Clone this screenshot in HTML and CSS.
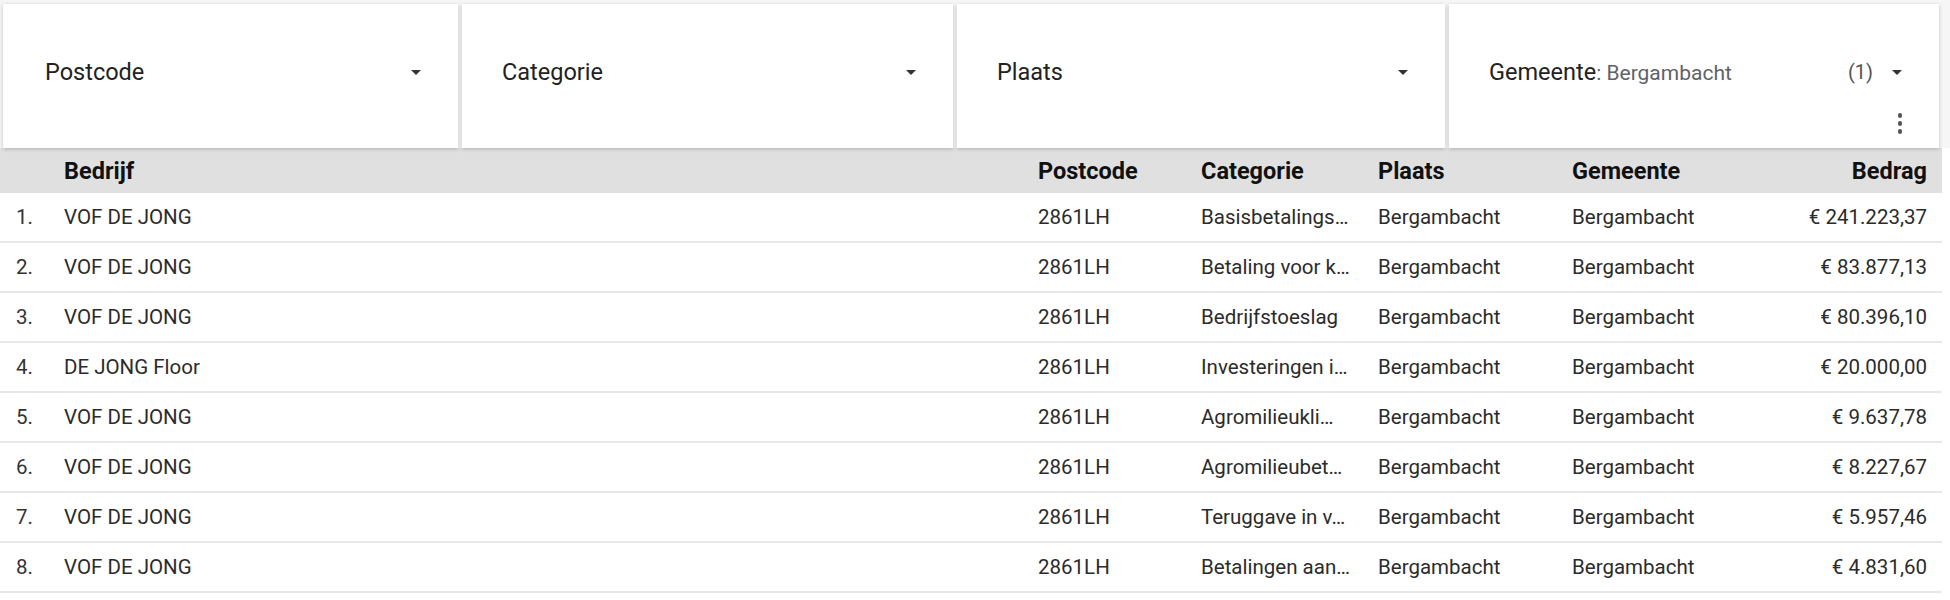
FILE: index.html
```html
<!DOCTYPE html>
<html lang="nl">
<head>
<meta charset="utf-8">
<title>Bedrijven</title>
<link rel="stylesheet" href="styles.css">
</head>
<body>
<div class="filters">
  <div class="card">
    <span class="label">Postcode</span>
    <span class="caret"></span>
  </div>
  <div class="card">
    <span class="label">Categorie</span>
    <span class="caret"></span>
  </div>
  <div class="card">
    <span class="label">Plaats</span>
    <span class="caret"></span>
  </div>
  <div class="card card-active">
    <span class="label">Gemeente<span class="value">: Bergambacht</span></span>
    <span class="count">(1)</span>
    <span class="caret"></span>
    <span class="kebab"><i></i><i></i><i></i></span>
  </div>
</div>

<div class="table">
  <div class="row head">
    <div class="c idx"></div>
    <div class="c">Bedrijf</div>
    <div class="c">Postcode</div>
    <div class="c">Categorie</div>
    <div class="c">Plaats</div>
    <div class="c">Gemeente</div>
    <div class="c num">Bedrag</div>
  </div>
  <div class="row">
    <div class="c idx">1.</div><div class="c">VOF DE JONG</div><div class="c">2861LH</div><div class="c cat">Basisbetalings…</div><div class="c">Bergambacht</div><div class="c">Bergambacht</div><div class="c num">€ 241.223,37</div>
  </div>
  <div class="row">
    <div class="c idx">2.</div><div class="c">VOF DE JONG</div><div class="c">2861LH</div><div class="c cat">Betaling voor k…</div><div class="c">Bergambacht</div><div class="c">Bergambacht</div><div class="c num">€ 83.877,13</div>
  </div>
  <div class="row">
    <div class="c idx">3.</div><div class="c">VOF DE JONG</div><div class="c">2861LH</div><div class="c cat">Bedrijfstoeslag</div><div class="c">Bergambacht</div><div class="c">Bergambacht</div><div class="c num">€ 80.396,10</div>
  </div>
  <div class="row">
    <div class="c idx">4.</div><div class="c">DE JONG Floor</div><div class="c">2861LH</div><div class="c cat">Investeringen i…</div><div class="c">Bergambacht</div><div class="c">Bergambacht</div><div class="c num">€ 20.000,00</div>
  </div>
  <div class="row">
    <div class="c idx">5.</div><div class="c">VOF DE JONG</div><div class="c">2861LH</div><div class="c cat">Agromilieukli…</div><div class="c">Bergambacht</div><div class="c">Bergambacht</div><div class="c num">€ 9.637,78</div>
  </div>
  <div class="row">
    <div class="c idx">6.</div><div class="c">VOF DE JONG</div><div class="c">2861LH</div><div class="c cat">Agromilieubet…</div><div class="c">Bergambacht</div><div class="c">Bergambacht</div><div class="c num">€ 8.227,67</div>
  </div>
  <div class="row">
    <div class="c idx">7.</div><div class="c">VOF DE JONG</div><div class="c">2861LH</div><div class="c cat">Teruggave in v…</div><div class="c">Bergambacht</div><div class="c">Bergambacht</div><div class="c num">€ 5.957,46</div>
  </div>
  <div class="row">
    <div class="c idx">8.</div><div class="c">VOF DE JONG</div><div class="c">2861LH</div><div class="c cat">Betalingen aan…</div><div class="c">Bergambacht</div><div class="c">Bergambacht</div><div class="c num">€ 4.831,60</div>
  </div>
</div>
</body>
</html>
```
FILE: styles.css
```css
html, body {
  margin: 0;
  padding: 0;
  background: #ffffff;
  font-family: Roboto, "Liberation Sans", Arial, sans-serif;
  color: #222222;
}

.filters {
  display: grid;
  grid-template-columns: 455px 491px 488px 490px;
  column-gap: 4px;
  padding: 4px 0 0 3px;
  width: 1950px;
  box-sizing: border-box;
  background: #f6f6f6;
  position: relative;
  z-index: 2;
}

.card {
  position: relative;
  height: 144px;
  background: #ffffff;
  box-shadow: 0 1px 4px rgba(0, 0, 0, 0.22);
  display: flex;
  align-items: center;
  padding: 0 37px 8px 40px;
  box-sizing: border-box;
}

.card:first-child {
  padding-left: 42px;
}

.label {
  flex: 1;
  font-size: 23.5px;
  color: #222222;
  white-space: nowrap;
}

.value {
  font-size: 21px;
  color: #5f6368;
}

.count {
  font-size: 20px;
  color: #555555;
  margin-right: 19px;
}

.caret {
  width: 0;
  height: 0;
  border-left: 5px solid transparent;
  border-right: 5px solid transparent;
  border-top: 5px solid #333333;
}

.kebab {
  position: absolute;
  right: 37px;
  top: 109px;
  display: flex;
  flex-direction: column;
  gap: 3.5px;
}

.kebab i {
  display: block;
  width: 4.5px;
  height: 4.5px;
  border-radius: 50%;
  background: #555555;
}

.table {
  width: 1942px;
  position: relative;
  z-index: 1;
}

.row {
  display: grid;
  grid-template-columns: 64px 974px 163px 177px 194px 200px 1fr;
  align-items: center;
  height: 50px;
  box-sizing: border-box;
  border-bottom: 2px solid #e8e8e8;
  font-size: 20.5px;
  color: #2b2b2b;
  padding-right: 15px;
}

.row.head {
  height: 45px;
  background: #e0e0e0;
  border-bottom: none;
  font-size: 23.5px;
  font-weight: 700;
  color: #111111;
  padding-top: 1px;
}

.c {
  white-space: nowrap;
  overflow: hidden;
}

.idx {
  padding-left: 16px;
  color: #333333;
}

.cat {
  padding-right: 20px;
}

.num {
  text-align: right;
}
```
